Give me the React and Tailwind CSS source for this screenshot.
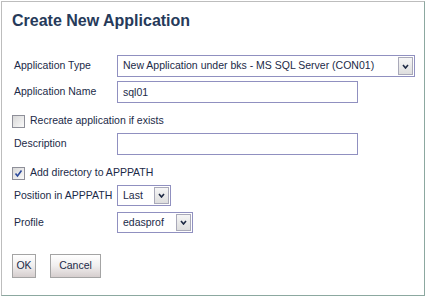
import React from 'react';

const font = { fontFamily: '"Liberation Sans", Arial, sans-serif' };

const Chevron = () => (
    <svg width="7" height="5" viewBox="0 0 7 5" className="block">
        <path d="M1 1 L3.5 4 L6 1" fill="none" stroke="#1e2a44" strokeWidth="1.6" />
    </svg>
);

// fake select box, like the old browser one
const Select = ({ value, width, height = 'h-[22px]' }) => (
    <div className={`flex ${height} ${width} border border-[#9090c0] bg-white`}>
        <div className="flex-1 flex items-center pl-[5px] text-[10.5px] text-[#1b2a48] whitespace-nowrap overflow-hidden">
            {value}
        </div>
        <div className="w-[15px] my-px mr-px flex items-center justify-center border border-[#a9a9b9] bg-gradient-to-b from-[#f6f6f6] to-[#dedede]">
            <Chevron />
        </div>
    </div>
);

const TextBox = ({ value = '' }) => (
    <input
        type="text"
        defaultValue={value}
        className="h-[22px] w-[241px] border border-[#9090c0] bg-white px-[5px] text-[10.5px] text-[#1b2a48] outline-none"
        style={font}
    />
);

const Check = ({ checked }) => (
    <span className="w-[13px] h-[13px] border border-[#8e8f99] bg-gradient-to-br from-[#d8d8d8] to-[#fafafa] flex items-center justify-center">
        {checked && (
            <svg width="9" height="9" viewBox="0 0 9 9">
                <path d="M1.5 4.5 L3.5 7 L7.5 1.5" fill="none" stroke="#2c4a9c" strokeWidth="1.6" />
            </svg>
        )}
    </span>
);

const Row = ({ label, children, className = '' }) => (
    <div className={`flex items-center ${className}`}>
        <div className="w-[103px] text-[10.5px] text-[#1b2a48]">{label}</div>
        {children}
    </div>
);

const Button = ({ children, width }) => (
    <button
        type="button"
        className={`${width} h-[24px] border border-[#a4a4a4] bg-gradient-to-b from-[#ffffff] via-[#f0eeee] to-[#d6cece] text-[10.5px] text-[#1b2a48]`}
        style={font}
    >
        {children}
    </button>
);

export default function App() {
    return (
        <div className="w-[426px] h-[297px] bg-white pt-px pl-px" style={font}>
            <div className="w-[424px] h-[295px] border-t border-l border-[#bdbdbd] border-r border-b border-r-[#8ca8a0] border-b-[#8ca8a0] bg-white pl-[12px] pt-[9px]">
                <h1 className="-ml-[2px] text-[16px] leading-[20px] font-bold text-[#263a5a]">Create New Application</h1>

                <div className="flex flex-col mt-[24px]">
                    <Row label="Application Type" className="h-[22px]">
                        <Select value="New Application under bks - MS SQL Server (CON01)" width="w-[298px]" />
                    </Row>
                    <Row label="Application Name" className="h-[22px] mt-[4px]">
                        <TextBox value="sql01" />
                    </Row>

                    <label className="-ml-[2px] flex items-center gap-[5px] h-[16px] mt-[10px] text-[10.5px] text-[#1b2a48]">
                        <Check />
                        Recreate application if exists
                    </label>

                    <Row label="Description" className="h-[22px] mt-[4px]">
                        <TextBox />
                    </Row>

                    <label className="-ml-[2px] flex items-center gap-[5px] h-[16px] mt-[10px] text-[10.5px] text-[#1b2a48]">
                        <Check checked />
                        Add directory to APPPATH
                    </label>

                    <Row label="Position in APPPATH" className="h-[21px] mt-[4px]">
                        <Select value="Last" width="w-[54px]" height="h-[21px]" />
                    </Row>
                    <Row label="Profile" className="h-[21px] mt-[6px]">
                        <Select value="edasprof" width="w-[76px]" height="h-[21px]" />
                    </Row>

                    <div className="-ml-[2px] flex gap-[14px] mt-[21px]">
                        <Button width="w-[24px]">OK</Button>
                        <Button width="w-[51px]">Cancel</Button>
                    </div>
                </div>
            </div>
        </div>
    );
}
